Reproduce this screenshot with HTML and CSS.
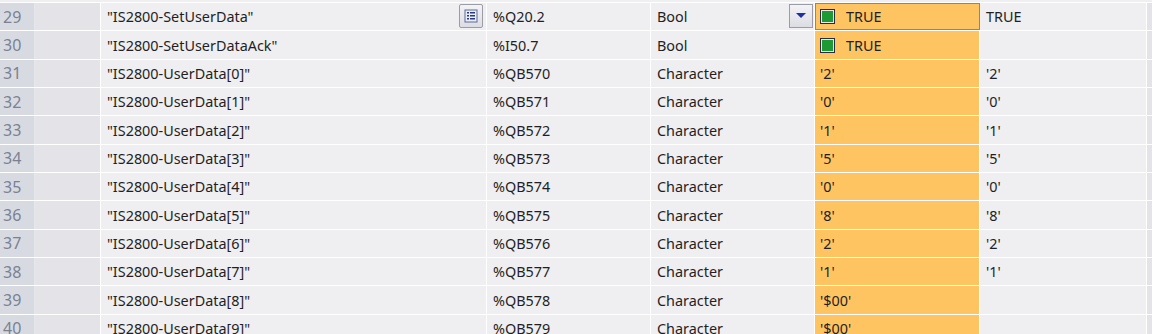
FILE: index.html
```html
<!DOCTYPE html>
<html lang="en">
<head>
  <meta charset="UTF-8">
  <title>Watch table</title>
  <link rel="stylesheet" href="styles.css">
</head>
<body>
  <div class="watch">
    <div class="row">
      <div class="cell num">29</div>
      <div class="cell blank"></div>
      <div class="cell name">"IS2800-SetUserData"
        <span class="icon-btn">
          <svg width="14" height="14" viewBox="0 0 14 14">
            <rect x="1" y="1" width="12" height="12" fill="#e9eefa" stroke="#5a6a9a"/>
            <rect x="3" y="3" width="2" height="1.5" fill="#2a3a80"/><rect x="6" y="3" width="5" height="1.5" fill="#2a3a80"/>
            <rect x="3" y="6" width="2" height="1.5" fill="#2a3a80"/><rect x="6" y="6" width="5" height="1.5" fill="#2a3a80"/>
            <rect x="3" y="9" width="2" height="1.5" fill="#2a3a80"/><rect x="6" y="9" width="5" height="1.5" fill="#2a3a80"/>
          </svg>
        </span>
      </div>
      <div class="cell">%Q20.2</div>
      <div class="cell type">Bool
        <span class="drop-btn">
          <svg width="12" height="8" viewBox="0 0 12 8"><polygon points="1,1 11,1 6,6" fill="#1a2fa8"/></svg>
        </span>
      </div>
      <div class="cell mon selected"><span class="check"></span>TRUE</div>
      <div class="cell">TRUE</div>
      <div class="cell tail"></div>
    </div>
    <div class="row">
      <div class="cell num">30</div>
      <div class="cell blank"></div>
      <div class="cell name">"IS2800-SetUserDataAck"</div>
      <div class="cell">%I50.7</div>
      <div class="cell type">Bool</div>
      <div class="cell mon"><span class="check"></span>TRUE</div>
      <div class="cell"></div>
      <div class="cell tail"></div>
    </div>
    <div class="row">
      <div class="cell num">31</div><div class="cell blank"></div>
      <div class="cell name">"IS2800-UserData[0]"</div><div class="cell">%QB570</div>
      <div class="cell type">Character</div><div class="cell mon">'2'</div><div class="cell">'2'</div><div class="cell tail"></div>
    </div>
    <div class="row">
      <div class="cell num">32</div><div class="cell blank"></div>
      <div class="cell name">"IS2800-UserData[1]"</div><div class="cell">%QB571</div>
      <div class="cell type">Character</div><div class="cell mon">'0'</div><div class="cell">'0'</div><div class="cell tail"></div>
    </div>
    <div class="row">
      <div class="cell num">33</div><div class="cell blank"></div>
      <div class="cell name">"IS2800-UserData[2]"</div><div class="cell">%QB572</div>
      <div class="cell type">Character</div><div class="cell mon">'1'</div><div class="cell">'1'</div><div class="cell tail"></div>
    </div>
    <div class="row">
      <div class="cell num">34</div><div class="cell blank"></div>
      <div class="cell name">"IS2800-UserData[3]"</div><div class="cell">%QB573</div>
      <div class="cell type">Character</div><div class="cell mon">'5'</div><div class="cell">'5'</div><div class="cell tail"></div>
    </div>
    <div class="row">
      <div class="cell num">35</div><div class="cell blank"></div>
      <div class="cell name">"IS2800-UserData[4]"</div><div class="cell">%QB574</div>
      <div class="cell type">Character</div><div class="cell mon">'0'</div><div class="cell">'0'</div><div class="cell tail"></div>
    </div>
    <div class="row">
      <div class="cell num">36</div><div class="cell blank"></div>
      <div class="cell name">"IS2800-UserData[5]"</div><div class="cell">%QB575</div>
      <div class="cell type">Character</div><div class="cell mon">'8'</div><div class="cell">'8'</div><div class="cell tail"></div>
    </div>
    <div class="row">
      <div class="cell num">37</div><div class="cell blank"></div>
      <div class="cell name">"IS2800-UserData[6]"</div><div class="cell">%QB576</div>
      <div class="cell type">Character</div><div class="cell mon">'2'</div><div class="cell">'2'</div><div class="cell tail"></div>
    </div>
    <div class="row">
      <div class="cell num">38</div><div class="cell blank"></div>
      <div class="cell name">"IS2800-UserData[7]"</div><div class="cell">%QB577</div>
      <div class="cell type">Character</div><div class="cell mon">'1'</div><div class="cell">'1'</div><div class="cell tail"></div>
    </div>
    <div class="row">
      <div class="cell num">39</div><div class="cell blank"></div>
      <div class="cell name">"IS2800-UserData[8]"</div><div class="cell">%QB578</div>
      <div class="cell type">Character</div><div class="cell mon">'$00'</div><div class="cell"></div><div class="cell tail"></div>
    </div>
    <div class="row">
      <div class="cell num">40</div><div class="cell blank"></div>
      <div class="cell name">"IS2800-UserData[9]"</div><div class="cell">%QB579</div>
      <div class="cell type">Character</div><div class="cell mon">'$00'</div><div class="cell"></div><div class="cell tail"></div>
    </div>
  </div>
</body>
</html>
```

FILE: styles.css
```css
body {
  margin: 0;
  background: #efeef1;
  font-family: "Noto Sans", "Open Sans", sans-serif;
  font-size: 14.4px;
  color: #1f1f24;
  overflow: hidden;
}
.watch {
  margin-top: 2px;
  border-top: 1px solid #ffffff;
}
.row {
  display: grid;
  grid-template-columns: 35px 66px 386px 164px 164px 165px 167px 1fr;
  height: 28.35px;
  box-sizing: border-box;
  border-bottom: 1px solid #ffffff;
}
.cell {
  display: flex;
  align-items: center;
  padding-left: 6px;
  border-right: 1px solid #ffffff;
  white-space: nowrap;
  position: relative;
}
.num {
  background: #d8dae2;
  color: #7a8291;
  padding-left: 3px;
  font-size: 16px;
  border-right-color: #e6e6ec;
}
.blank {
  background: #e3e3e8;
}
.tail {
  background: #e3e3e8;
  border-right: none;
}
.mon {
  background: #ffc462;
  padding-left: 5px;
}
.mon.selected {
  outline: 1px solid #5a8fd8;
  outline-offset: -1px;
}
.check {
  width: 11px;
  height: 11px;
  border: 1px solid #2b2b46;
  background: #1e9a35;
  box-shadow: inset 0 0 0 1px #e8e8ee;
  margin-right: 11px;
  padding: 1px;
  background-clip: content-box;
}
.icon-btn, .drop-btn {
  position: absolute;
  top: 1px;
  width: 24px;
  height: 24px;
  box-sizing: border-box;
  border: 1px solid #9a9ca6;
  border-radius: 2px;
  background: linear-gradient(#f3f3f6, #dcdde3);
  display: flex;
  align-items: center;
  justify-content: center;
}
.icon-btn {
  right: 3px;
}
.drop-btn {
  right: 1px;
  border-radius: 0;
}
```
